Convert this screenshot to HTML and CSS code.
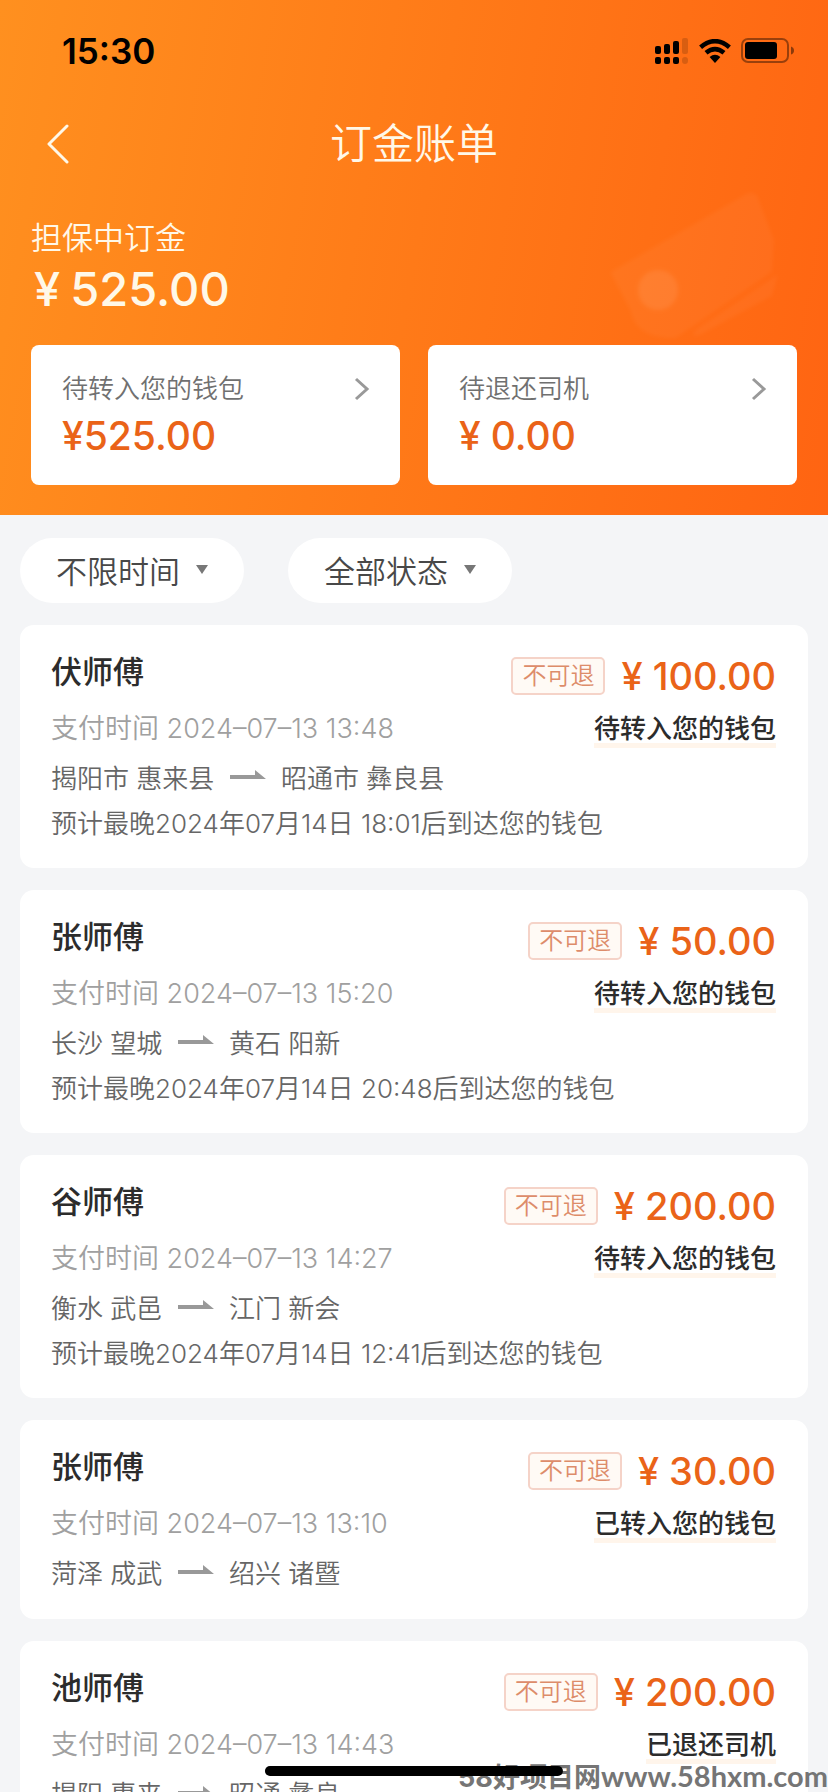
FILE: index.html
```html
<!DOCTYPE html>
<html lang="zh-CN">
<head>
<meta charset="utf-8">
<meta name="viewport" content="width=device-width, initial-scale=1">
<title>订金账单</title>
<link rel="stylesheet" href="styles.css">
</head>
<body>
<div class="app">
  <header class="hero">
    <svg class="hero-art" viewBox="0 0 190 160" aria-hidden="true">
      <path class="art-ticket" d="M4 82 L140 4 Q150 0 153 10 L168 50 L166 82 L70 148 Q30 150 24 120 Z"/>
      <path class="art-ticket" d="M172 84 L166 106 L96 144 Q80 150 92 138 Z"/>
      <circle class="art-dot" cx="52" cy="100" r="20"/>
    </svg>
    <div class="status-bar">
      <span class="clock">15:30</span>
      <div class="status-icons">
        <svg width="34" height="28" viewBox="0 0 34 28" aria-hidden="true">
          <g><rect x="0" y="9" width="6" height="8" rx="2"/><rect x="9" y="7" width="6" height="10" rx="2"/><rect x="18" y="4" width="6" height="13" rx="2"/>
          <rect x="0" y="20" width="6" height="7" rx="2"/><rect x="9" y="20" width="6" height="7" rx="2"/><rect x="18" y="20" width="6" height="7" rx="2"/></g>
          <g opacity=".15"><rect x="27" y="1" width="6" height="16" rx="2"/><rect x="27" y="20" width="6" height="7" rx="3"/></g>
        </svg>
        <svg width="32" height="24" viewBox="0 0 32 24" aria-hidden="true">
          <g fill="none" stroke="#000" stroke-width="4.6"><path d="M1.6 8.2 Q16 -3.8 30.4 8.2"/><path d="M7 13.8 Q16 6.4 25 13.8"/></g>
          <path d="M10.6 18 Q16 13.6 21.4 18 L16 24 Z"/>
        </svg>
        <svg width="54" height="26" viewBox="0 0 54 26" aria-hidden="true">
          <rect x="1" y="1" width="46" height="23" rx="6" fill="none" stroke="#000" stroke-opacity=".4" stroke-width="2"/>
          <rect x="4" y="4" width="32" height="17" rx="3"/>
          <path d="M50 8.5 Q53 9.5 53 12.5 Q53 15.5 50 16.5 Z" opacity=".45"/>
        </svg>
      </div>
    </div>
    <nav class="nav-bar">
      <button class="back" type="button" aria-label="返回">
        <svg width="22" height="40" viewBox="0 0 22 40" aria-hidden="true"><path d="M20 2 L2 20 L20 38"/></svg>
      </button>
      <h1 class="title">订金账单</h1>
    </nav>
    <section class="balance">
      <p class="balance-label">担保中订金</p>
      <p class="balance-amount"><span class="yen">¥</span>525.00</p>
    </section>
    <section class="summary">
      <a class="tile" href="#wallet">
        <span class="tile-head">待转入您的钱包
          <svg class="chevron" width="16" height="24" viewBox="0 0 16 24" aria-hidden="true"><path d="M2 2 L13 12 L2 22"/></svg>
        </span>
        <span class="tile-amount">¥525.00</span>
      </a>
      <a class="tile" href="#refund">
        <span class="tile-head">待退还司机
          <svg class="chevron" width="16" height="24" viewBox="0 0 16 24" aria-hidden="true"><path d="M2 2 L13 12 L2 22"/></svg>
        </span>
        <span class="tile-amount"><span class="yen">¥</span>0.00</span>
      </a>
    </section>
  </header>

  <main class="content">
    <div class="filters">
      <button class="filter" type="button">不限时间<span class="caret"></span></button>
      <button class="filter" type="button">全部状态<span class="caret"></span></button>
    </div>

    <article class="bill">
      <div class="bill-head"><h2 class="name">伏师傅</h2><span class="tag">不可退</span><span class="price"><span class="yen">¥</span>100.00</span></div>
      <div class="bill-meta"><span class="time">支付时间 2024–07–13 13:48</span><strong class="state">待转入您的钱包</strong></div>
      <p class="route">揭阳市 惠来县 <svg class="arrow" viewBox="0 0 36 10" role="img" aria-label="至"><path d="M0 5 H25 V0 L36 9 H0 Z"/></svg> 昭通市 彝良县</p>
      <p class="eta">预计最晚2024年07月14日 18:01后到达您的钱包</p>
    </article>

    <article class="bill">
      <div class="bill-head"><h2 class="name">张师傅</h2><span class="tag">不可退</span><span class="price"><span class="yen">¥</span>50.00</span></div>
      <div class="bill-meta"><span class="time">支付时间 2024–07–13 15:20</span><strong class="state">待转入您的钱包</strong></div>
      <p class="route">长沙 望城 <svg class="arrow" viewBox="0 0 36 10" role="img" aria-label="至"><path d="M0 5 H25 V0 L36 9 H0 Z"/></svg> 黄石 阳新</p>
      <p class="eta">预计最晚2024年07月14日 20:48后到达您的钱包</p>
    </article>

    <article class="bill">
      <div class="bill-head"><h2 class="name">谷师傅</h2><span class="tag">不可退</span><span class="price"><span class="yen">¥</span>200.00</span></div>
      <div class="bill-meta"><span class="time">支付时间 2024–07–13 14:27</span><strong class="state">待转入您的钱包</strong></div>
      <p class="route">衡水 武邑 <svg class="arrow" viewBox="0 0 36 10" role="img" aria-label="至"><path d="M0 5 H25 V0 L36 9 H0 Z"/></svg> 江门 新会</p>
      <p class="eta">预计最晚2024年07月14日 12:41后到达您的钱包</p>
    </article>

    <article class="bill">
      <div class="bill-head"><h2 class="name">张师傅</h2><span class="tag">不可退</span><span class="price"><span class="yen">¥</span>30.00</span></div>
      <div class="bill-meta"><span class="time">支付时间 2024–07–13 13:10</span><strong class="state">已转入您的钱包</strong></div>
      <p class="route">菏泽 成武 <svg class="arrow" viewBox="0 0 36 10" role="img" aria-label="至"><path d="M0 5 H25 V0 L36 9 H0 Z"/></svg> 绍兴 诸暨</p>
    </article>

    <article class="bill">
      <div class="bill-head"><h2 class="name">池师傅</h2><span class="tag">不可退</span><span class="price"><span class="yen">¥</span>200.00</span></div>
      <div class="bill-meta"><span class="time">支付时间 2024–07–13 14:43</span><strong class="state">已退还司机</strong></div>
      <p class="route">揭阳 惠来 <svg class="arrow" viewBox="0 0 36 10" role="img" aria-label="至"><path d="M0 5 H25 V0 L36 9 H0 Z"/></svg> 昭通 彝良</p>
    </article>
  </main>

  <div class="watermark">58好项目网<span class="site">www.58hxm.com</span></div>
  <div class="home-indicator"></div>
</div>
</body>
</html>
```
FILE: styles.css
```css
* { box-sizing: border-box; }
body, h1, h2, p { margin: 0; font-weight: inherit; }
body {
  background: #f4f5f7;
  color: #666;
  font-family: Inter, "Noto Sans CJK SC", sans-serif;
  font-size: 26px;
  font-weight: 350;
}
button { border: 0; padding: 0; background: none; font: inherit; color: inherit; }
a { color: inherit; text-decoration: none; }

.app {
  position: relative;
  display: flex;
  flex-direction: column;
  height: 100vh;
  overflow: hidden;
}

/* Header */
.hero {
  position: relative;
  flex: none;
  padding: 0 31px 30px;
  background: linear-gradient(100deg, #ff901f 0%, #ff7a18 50%, #ff6412 100%);
  color: #fff8e8;
}
.hero-art { position: absolute; right: 32px; top: 190px; width: 190px; filter: blur(2px); }
.art-ticket { fill: #fff; opacity: .04; }
.art-dot { fill: #fff; opacity: .08; }

.status-bar {
  position: relative;
  display: flex;
  align-items: center;
  justify-content: space-between;
  height: 102px;
  padding-left: 31px;
  color: #000;
}
.clock { font-size: 35px; font-weight: 600; }
.status-icons { display: flex; align-items: center; gap: 10px; padding-right: 2px; }

.nav-bar {
  position: relative;
  display: grid;
  grid-template-columns: 60px 1fr 60px;
  align-items: center;
  height: 84px;
}
.back { display: flex; padding-left: 16px; }
.back svg { fill: none; stroke: #fff8e8; stroke-width: 3; stroke-linecap: round; stroke-linejoin: round; }
.title { text-align: center; font-size: 42px; line-height: 60px; }

.balance { position: relative; padding-top: 29px; }
.balance-label { font-size: 31px; line-height: 46px; }
.balance-amount { font-size: 47px; line-height: 56px; font-weight: 500; padding-left: 3px; }
.yen { margin-right: 10px; }

.summary {
  position: relative;
  display: grid;
  grid-template-columns: 1fr 1fr;
  gap: 28px;
  margin-top: 28px;
}
.tile {
  display: flex;
  flex-direction: column;
  height: 140px;
  padding: 24px 30px 0 31px;
  border-radius: 8px;
  background: #fff;
  color: #707070;
}
.tile-head { display: flex; align-items: center; justify-content: space-between; line-height: 40px; }
.chevron { fill: none; stroke: #999; stroke-width: 3; }
.tile-amount { color: #ea6318; font-size: 39px; line-height: 54px; font-weight: 500; }

/* List */
.content { padding: 23px 20px 0; }
.filters { display: flex; gap: 44px; margin-bottom: 22px; }
.filter {
  display: flex;
  align-items: center;
  gap: 16px;
  height: 65px;
  padding: 0 36px 3px;
  border-radius: 33px;
  background: #fff;
  color: #484848;
  font-size: 31px;
}
.caret { border: 6px solid transparent; border-top: 9px solid #777; border-bottom: 0; }

.bill { margin-bottom: 22px; padding: 24px 32px 22px 31px; border-radius: 14px; background: #fff; }
.bill-head { display: flex; align-items: center; height: 54px; }
.name { flex: 1; align-self: flex-start; color: #2c2c2c; font-size: 31px; line-height: 46px; font-weight: 500; }
.tag {
  padding: 0 9px;
  border: 2px solid #f5d3c8;
  border-radius: 5px;
  background: #fffaf5;
  color: #dd8c6a;
  font-size: 24px;
  line-height: 34px;
}
.price { margin-left: 16px; color: #ea6318; font-size: 38px; line-height: 48px; font-weight: 500; }
.bill-meta { display: flex; align-items: center; justify-content: space-between; margin: 7px 0 8px; line-height: 38px; }
.time { color: #a0a0a0; font-size: 27px; }
.state { color: #2c2c2c; font-weight: 500; background: linear-gradient(transparent 86%, #fff5eb 86%); }
.route { line-height: 46px; }
.arrow { width: 36px; height: 10px; margin: 0 8px; vertical-align: 8px; fill: #999; }
.eta { line-height: 44px; }

/* Overlays */
.watermark {
  position: absolute;
  right: 0;
  bottom: 0;
  color: #757575;
  font-size: 27px;
  line-height: 28px;
  font-weight: 700;
  white-space: nowrap;
}
.site { font-family: Lato, sans-serif; font-size: 29px; }
.home-indicator {
  position: absolute;
  left: 50%;
  bottom: 16px;
  width: 36%;
  height: 10px;
  border-radius: 5px;
  background: #000;
  transform: translateX(-50%);
}
```
